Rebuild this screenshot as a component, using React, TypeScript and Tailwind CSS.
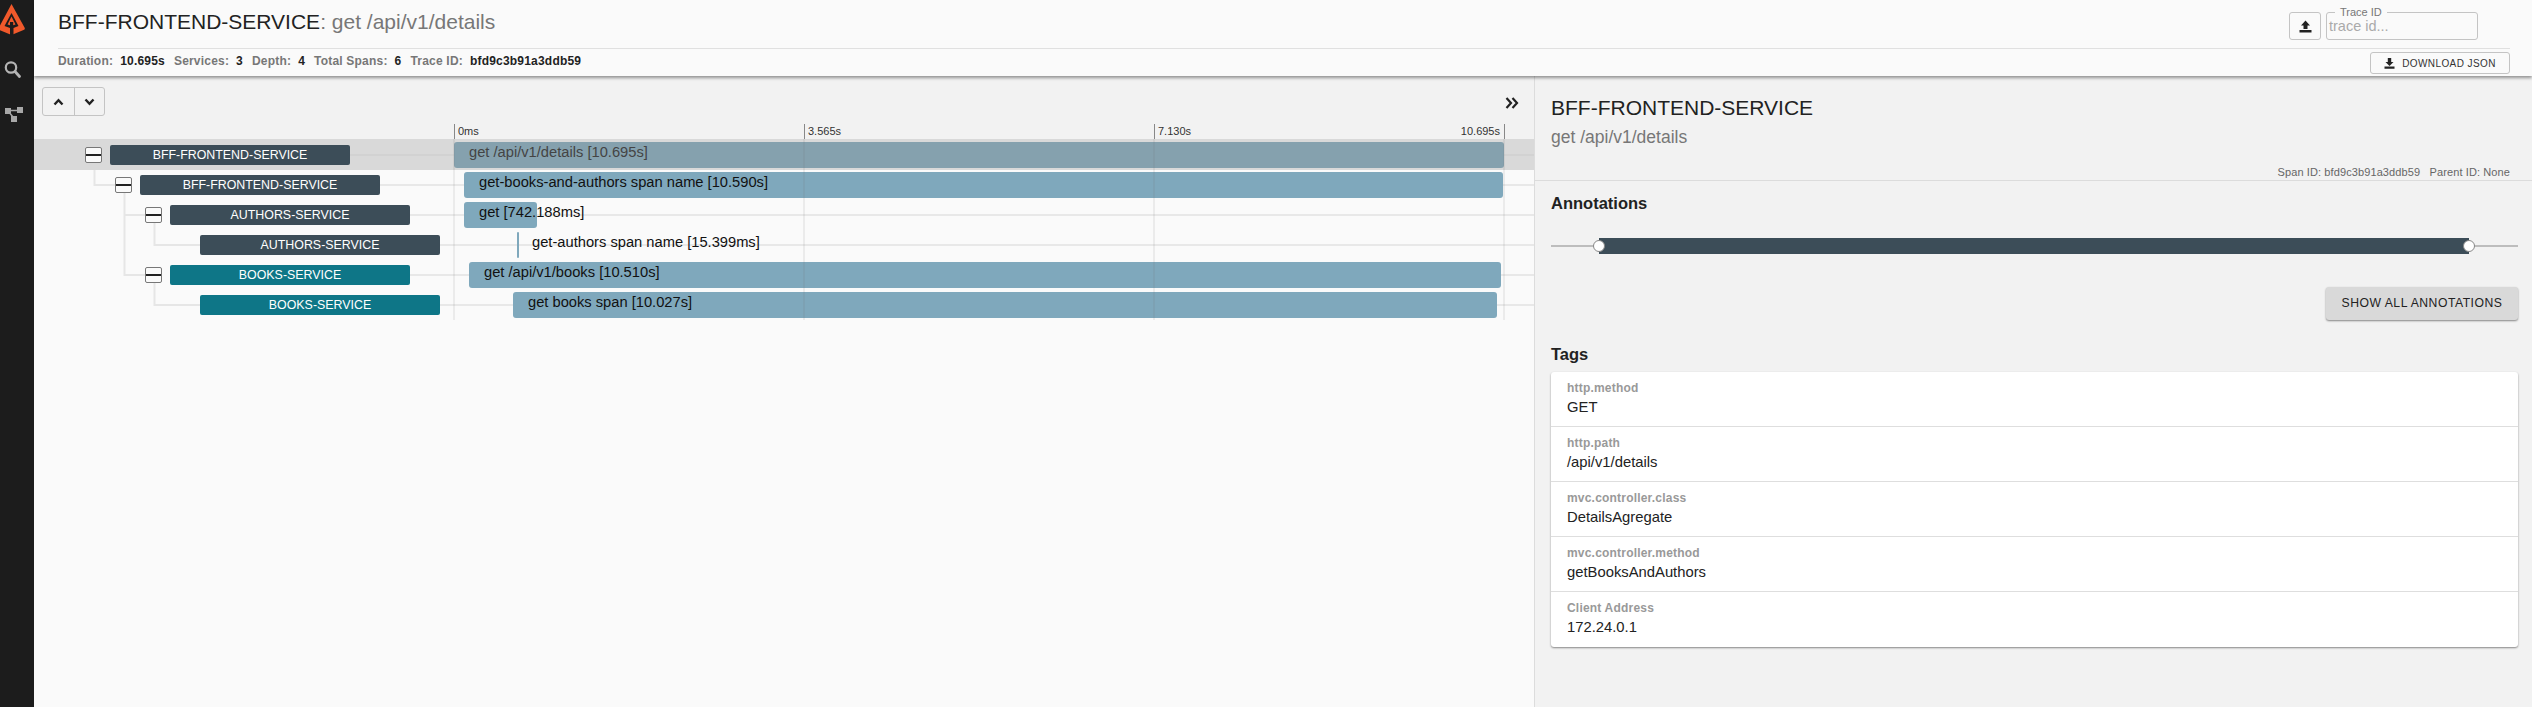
import React from "react";

const font = { fontFamily: '"Liberation Sans", Arial, sans-serif' };

type Span = { service: string; name: string; depth: number; left: number; width: number; teal?: boolean };

const spans: Span[] = [
  { service: "BFF-FRONTEND-SERVICE", name: "get /api/v1/details [10.695s]", depth: 0, left: 0, width: 1050 },
  { service: "BFF-FRONTEND-SERVICE", name: "get-books-and-authors span name [10.590s]", depth: 1, left: 10, width: 1039 },
  { service: "AUTHORS-SERVICE", name: "get [742.188ms]", depth: 2, left: 10, width: 73 },
  { service: "AUTHORS-SERVICE", name: "get-authors span name [15.399ms]", depth: 3, left: 63, width: 2 },
  { service: "BOOKS-SERVICE", name: "get /api/v1/books [10.510s]", depth: 2, left: 15, width: 1032, teal: true },
  { service: "BOOKS-SERVICE", name: "get books span [10.027s]", depth: 3, left: 59, width: 984, teal: true },
];

const ticks = [
  { label: "0ms", x: 0 },
  { label: "3.565s", x: 350 },
  { label: "7.130s", x: 700 },
];

const tags = [
  ["http.method", "GET"],
  ["http.path", "/api/v1/details"],
  ["mvc.controller.class", "DetailsAgregate"],
  ["mvc.controller.method", "getBooksAndAuthors"],
  ["Client Address", "172.24.0.1"],
];

function Logo() {
  return (
    <svg width="34" height="40" viewBox="0 0 34 40" className="block">
      <path d="M11.5 4 L24.5 27.5 Q25.5 29.5 23.5 30 L11.5 35 L-0.5 30 Q-2 29.5 -1 27.5 Z" fill="#f0592b" />
      <path d="M11.5 13 L18.5 26 L13.5 28 L13.5 35 L10 35 L10 28 L4.5 26 Z" fill="#1c1c1c" />
      <path d="M11.5 16.5 L15.5 24.5 L13.2 25.3 L13.2 22 L10 22 L10 25.3 L7.5 24.5 Z" fill="#f0592b" />
    </svg>
  );
}

function Sidebar() {
  return (
    <div className="w-[34px] shrink-0 bg-[#1c1c1c] flex flex-col">
      <Logo />
      <svg width="34" height="24" viewBox="0 0 34 24" className="mt-[18px] block">
        <circle cx="11" cy="9.5" r="5.2" fill="none" stroke="#b4b4b4" strokeWidth="2.2" />
        <path d="M15 13.5 L19.5 18.5" stroke="#b4b4b4" strokeWidth="2.8" strokeLinecap="round" />
      </svg>
      <svg width="34" height="24" viewBox="0 0 34 24" className="mt-[25px] block">
        <rect x="5" y="1" width="6" height="6" fill="#a8a8a8" />
        <rect x="17" y="0" width="6" height="6" fill="#a8a8a8" />
        <rect x="11" y="9" width="6" height="6" fill="#a8a8a8" />
        <path d="M8 3.5 H18 M8 4 L13 10" stroke="#a8a8a8" strokeWidth="1.5" fill="none" />
      </svg>
    </div>
  );
}

function Header() {
  return (
    <div className="relative z-10 h-[76px] shrink-0 bg-[#fafafa] pl-[24px] pr-[22px] shadow-[0_2px_3px_rgba(0,0,0,0.4)]">
      <div className="h-[49px] border-b border-[#e0e0e0] flex items-start justify-between">
        <div className="pt-[6px] text-[21px] leading-[32px] text-[#222]">
          BFF-FRONTEND-SERVICE<span className="text-[#777]">: get /api/v1/details</span>
        </div>
        <div className="flex gap-[5px] mr-[32px] mt-[12px]">
          <button className="w-[32px] h-[28px] rounded-[3px] border border-[#c4c4c4] flex items-center justify-center">
            <svg width="13" height="13" viewBox="0 0 13 13">
              <path d="M6.5 0.5 L11 5.5 H8.5 V9 H4.5 V5.5 H2 Z M0.5 10 H12.5 V12.5 H0.5 Z" fill="#222" />
            </svg>
          </button>
          <div className="relative w-[152px] h-[28px] rounded-[3px] border border-[#c4c4c4] pl-[2px] text-[14.5px] leading-[26px] text-[#aaa]">
            trace id...
            <span className="absolute left-[8px] -top-[7px] bg-[#fafafa] px-[5px] text-[11px] leading-[12px] text-[#777]">Trace ID</span>
          </div>
        </div>
      </div>
      <div className="h-[26px] flex items-start justify-between">
        <div className="flex text-[12px] leading-[16px] mt-[4px] font-bold text-[#777] tracking-[0.2px]">
          {[["Duration:", "10.695s"], ["Services:", "3"], ["Depth:", "4"], ["Total Spans:", "6"], ["Trace ID:", "bfd9c3b91a3ddb59"]].map(([k, v]) => (
            <span key={k} className="mr-[9px]">
              {k}<span className="text-[#222] ml-[7px]">{v}</span>
            </span>
          ))}
        </div>
        <button className="w-[140px] h-[22px] mt-[3px] rounded-[3px] border border-[#c4c4c4] flex items-center justify-center gap-[7px] text-[10px] tracking-[0.4px] text-[#333]">
          <svg width="11" height="11" viewBox="0 0 11 11">
            <path d="M3.8 0 H7.2 V4 H9.5 L5.5 8 L1.5 4 H3.8 Z M0.5 8.5 H10.5 V10.8 H0.5 Z" fill="#222" />
          </svg>
          DOWNLOAD JSON
        </button>
      </div>
    </div>
  );
}

function Toolbar() {
  return (
    <div className="h-[63px] bg-[#f2f2f2] flex flex-col">
      <div className="flex items-start justify-between pl-[8px] pr-[15px] pt-[11px]">
        <div className="w-[63px] h-[29px] rounded-[3px] border border-[#c4c4c4] flex">
          <div className="w-[32px] border-r border-[#c4c4c4] flex items-center justify-center">
            <svg width="11" height="8" viewBox="0 0 11 8"><path d="M1.5 6.5 L5.5 2.2 L9.5 6.5" fill="none" stroke="#222" strokeWidth="2.4" /></svg>
          </div>
          <div className="flex-1 flex items-center justify-center">
            <svg width="11" height="8" viewBox="0 0 11 8"><path d="M1.5 1.5 L5.5 5.8 L9.5 1.5" fill="none" stroke="#222" strokeWidth="2.4" /></svg>
          </div>
        </div>
        <svg width="14" height="12" viewBox="0 0 14 12" className="mt-[10px]">
          <path d="M1.5 1 L6 6 L1.5 11 M7.5 1 L12 6 L7.5 11" fill="none" stroke="#222" strokeWidth="2.2" />
        </svg>
      </div>
    </div>
  );
}

function TreeLines() {
  const c = "#e6e6e6";
  return (
    <svg width="420" height="181" viewBox="0 0 420 181" className="absolute left-0 top-0 pointer-events-none">
      <path d="M60.5 24 V46 H82" stroke={c} strokeWidth="2" fill="none" />
      <path d="M90.5 54 V136 H112 M90.5 76 H112" stroke={c} strokeWidth="2" fill="none" />
      <path d="M120.5 84 V106 H166" stroke={c} strokeWidth="2" fill="none" />
      <path d="M120.5 144 V166 H166" stroke={c} strokeWidth="2" fill="none" />
    </svg>
  );
}

function Row({ s, i }: { s: Span; i: number }) {
  const selected = i === 0;
  const hasChildren = i !== 3 && i !== 5;
  return (
    <div className={`relative flex ${selected ? "h-[31px] bg-[#d9d9d9]" : "h-[30px]"}`}>
      <div className={`w-[420px] shrink-0 flex items-start ${selected ? "pt-[6px]" : "pt-[5px]"}`} style={{ paddingLeft: 51 + s.depth * 30 }}>
        <div className="w-[17px] h-[16px] mt-[2px] mr-[8px] shrink-0">
          {hasChildren && (
            <div className="w-[17px] h-[16px] rounded-[2px] border border-[#777] bg-[#fafafa] flex items-center">
              <div className="w-full h-[2px] bg-[#222]" />
            </div>
          )}
        </div>
        <div className={`w-[240px] h-[20px] rounded-[2px] text-white text-[12.4px] leading-[20px] text-center shrink-0 ${s.teal ? "bg-[#0e7687]" : "bg-[#3c4d58]"}`}>
          {s.service}
        </div>
      </div>
      <div className={`absolute right-0 h-[2px] ${selected ? "top-[15px] bg-[#d2d2d2]" : "top-[14px] bg-[#e8e8e8]"}`} style={{ left: 316 + s.depth * 30 }} />
      <div className={`relative flex-1 ${selected ? "pt-[3px]" : "pt-[2px]"}`}>
        <div
          className={`relative h-[26px] rounded-[3px] ${selected ? "bg-[#85a1ae]" : "bg-[#7fa8bc]"}`}
          style={{ marginLeft: s.left, width: s.width }}
        />
        <div
          className={`absolute text-[14.7px] leading-[24px] whitespace-nowrap ${selected ? "top-[1px] text-[#444]" : "top-0 text-[#111]"}`}
          style={{ left: s.left + 15 }}
        >
          {s.name}
        </div>
      </div>
    </div>
  );
}

function Timeline() {
  return (
    <div className="flex-1 min-w-0 flex flex-col">
      <Toolbar />
      <div className="flex-1 relative bg-[#fafafa]">
        <div className="relative">
          <TreeLines />
          {spans.map((s, i) => <Row key={i} s={s} i={i} />)}
          {[...ticks.map((t) => t.x), 1050].map((x) => (
            <div key={x} className="absolute top-0 h-[181px] w-[2px] bg-[#6b6b6b]/10" style={{ left: 419 + x }} />
          ))}
        </div>
        {ticks.map((t) => (
          <div key={t.x} className="absolute -top-[15px] h-[15px] border-l border-[#888] pl-[3px] text-[11px] leading-[15px] text-[#333]" style={{ left: 420 + t.x }}>
            {t.label}
          </div>
        ))}
        <div className="absolute -top-[15px] right-[29px] h-[15px] border-r border-[#888] pr-[4px] text-[11px] leading-[15px] text-[#333]">
          10.695s
        </div>
      </div>
    </div>
  );
}

function Panel() {
  return (
    <div className="w-[998px] shrink-0 bg-[#f2f2f2] border-l border-[#dcdcdc] flex flex-col">
      <div className="h-[105px] shrink-0 border-b border-[#dcdcdc] pl-[16px] pr-[22px] pt-[20px] relative">
        <div className="text-[21px] leading-[24px] text-[#222]">BFF-FRONTEND-SERVICE</div>
        <div className="text-[17.5px] leading-[20px] mt-[7px] text-[#777]">get /api/v1/details</div>
        <div className="absolute right-[22px] bottom-[1px] text-[11px] leading-[14px] text-[#666] tracking-[0.1px]">
          Span ID: bfd9c3b91a3ddb59 &nbsp;&nbsp;Parent ID: None
        </div>
      </div>
      <div className="pl-[16px] pr-[14px]">
        <div className="pt-[12px] text-[16.5px] leading-[20px] font-bold text-[#222]">Annotations</div>
        <div className="relative mt-[25px] h-[16px] flex items-center">
          <div className="w-full h-[2px] bg-[#bdbdbd]" />
          <div className="absolute left-[48px] right-[49px] top-0 h-[16px] bg-[#3c4d58]" />
          <div className="absolute left-[42px] top-[2px] w-[12px] h-[12px] rounded-full bg-white border border-[#888]" />
          <div className="absolute right-[43px] top-[2px] w-[12px] h-[12px] rounded-full bg-white border border-[#888]" />
        </div>
        <div className="flex justify-end mt-[33px]">
          <button className="w-[192px] h-[33px] rounded-[3px] bg-[#d9d9d9] shadow-[0_1px_2px_rgba(0,0,0,0.45)] text-[12.2px] tracking-[0.5px] text-[#222]">
            SHOW ALL ANNOTATIONS
          </button>
        </div>
        <div className="mt-[24px] text-[16.5px] leading-[20px] font-bold text-[#222]">Tags</div>
        <div className="mt-[8px] bg-white rounded-[3px] shadow-[0_1px_2px_rgba(0,0,0,0.45)]">
          {tags.map(([k, v], i) => (
            <div key={k} className={`h-[55px] pl-[16px] pt-[8px] ${i < tags.length - 1 ? "border-b border-[#dedede]" : ""}`}>
              <div className="text-[12px] leading-[16px] font-bold text-[#999] tracking-[0.2px]">{k}</div>
              <div className="text-[14.8px] leading-[20px] mt-[1px] text-[#222]">{v}</div>
            </div>
          ))}
        </div>
      </div>
    </div>
  );
}

export default function App() {
  return (
    <div className="w-[2532px] h-[707px] flex overflow-hidden bg-[#fafafa]" style={font}>
      <Sidebar />
      <div className="flex-1 min-w-0 flex flex-col">
        <Header />
        <div className="flex-1 min-h-0 flex">
          <Timeline />
          <Panel />
        </div>
      </div>
    </div>
  );
}
